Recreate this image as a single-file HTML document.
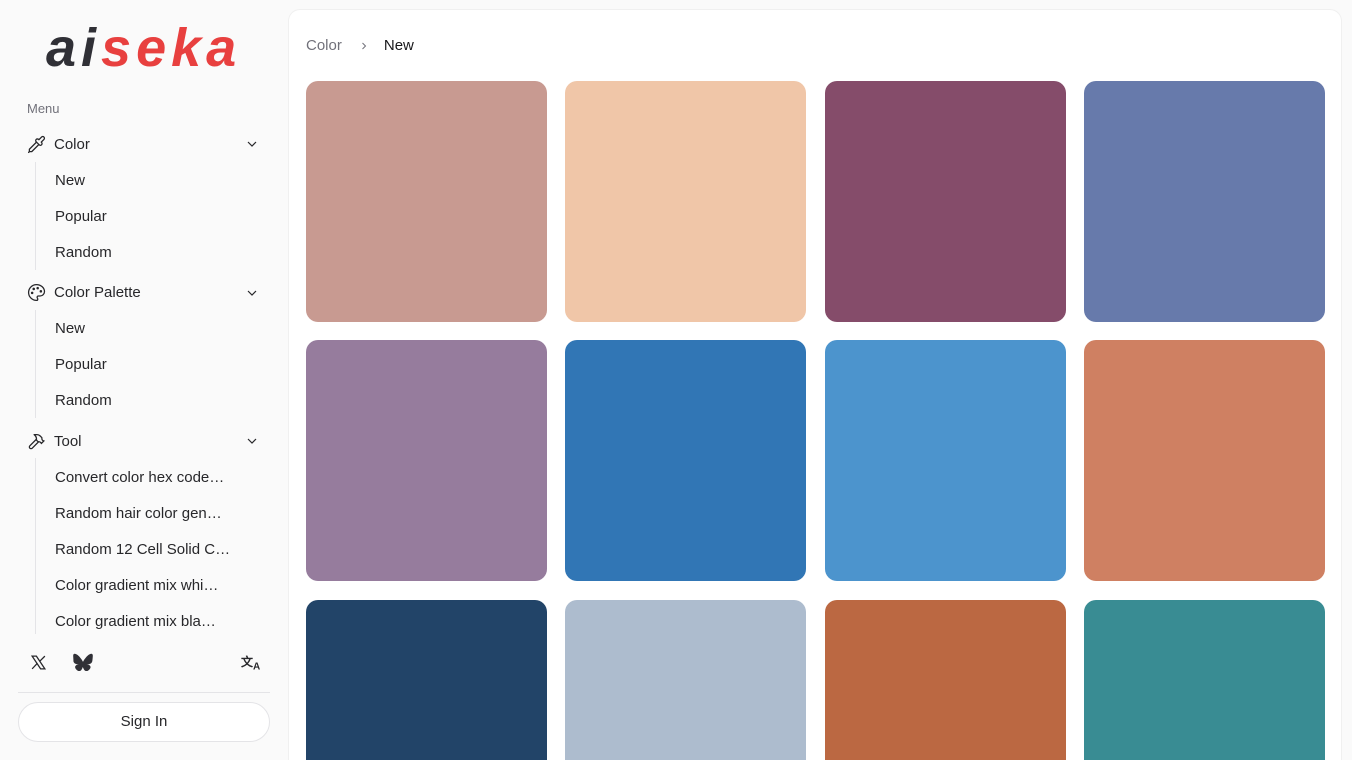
<!DOCTYPE html>
<html style="width:1352px;height:760px;overflow:hidden"><head><meta charset="utf-8"><style>
*{box-sizing:border-box;margin:0;padding:0}
body{width:1352px;height:760px;overflow:hidden;background:#fafafa;font-family:"Liberation Sans",sans-serif;color:#27272a;position:relative}
.side{position:absolute;left:0;top:0;width:288px;height:760px}
.logo{position:absolute;left:46px;top:18px;font-size:54px;font-weight:bold;font-style:italic;letter-spacing:5px;line-height:60px}
.logo .d{color:#303036}.logo .r{color:#e8403f}
.menu{position:absolute;left:27px;top:101px;font-size:13px;color:#71717a}
.item{position:absolute;left:27px;font-size:15px;color:#27272a;display:flex;align-items:center}
.item svg{margin-right:8px}
.chev{position:absolute;left:244px}
.sub{position:absolute;left:55px;font-size:15px;color:#27272a}
.vl{position:absolute;left:35px;width:1px;background:#e4e4e7}
.main{position:absolute;left:288px;top:9px;width:1054px;height:751px;background:#fff;border-radius:12px 12px 0 0;border:1px solid #f0f0f0;border-bottom:none}
.bc{position:absolute;left:306px;top:37px;font-size:15px;display:flex;align-items:center}
.sw{position:absolute;width:241px;height:241px;border-radius:12px}
</style></head><body>
<div class="side">
<div class="logo"><span class="d">ai</span><span class="r">seka</span></div>
<div class="menu">Menu</div>
<div class="item" style="top:135px"><svg width="19" height="19" viewBox="0 0 24 24" fill="none" stroke="#27272a" stroke-width="1.6" stroke-linecap="round" stroke-linejoin="round"><path d="M2 22l1-1h3l9-9"/><path d="M3 21v-3l9-9"/><path d="M15 6l3.4-3.4a2.1 2.1 0 1 1 3 3L18 9l.4.4a2.1 2.1 0 1 1-3 3l-3.8-3.8a2.1 2.1 0 1 1 3-3z"/></svg>Color</div>
<svg class="chev" style="top:136px" width="16" height="16" viewBox="0 0 24 24" fill="none" stroke="#27272a" stroke-width="1.8"><path d="M6 9l6 6 6-6"/></svg>
<div class="vl" style="top:162px;height:108px"></div>
<div class="sub" style="top:172px">New</div>
<div class="sub" style="top:208px">Popular</div>
<div class="sub" style="top:244px">Random</div>
<div class="item" style="top:283px"><svg width="19" height="19" viewBox="0 0 24 24" fill="none" stroke="#27272a" stroke-width="1.6"><circle cx="13.5" cy="6.5" r=".8"/><circle cx="17.5" cy="10.5" r=".8"/><circle cx="8.5" cy="7.5" r=".8"/><circle cx="6.5" cy="12.5" r=".8"/><path d="M12 2C6.5 2 2 6.5 2 12s4.5 10 10 10c.9 0 1.6-.7 1.6-1.7 0-.4-.2-.8-.4-1.1-.3-.3-.4-.7-.4-1.1 0-.9.7-1.7 1.7-1.7h2c3.1 0 5.6-2.5 5.6-5.6C22 6 17.5 2 12 2z"/></svg>Color Palette</div>
<svg class="chev" style="top:285px" width="16" height="16" viewBox="0 0 24 24" fill="none" stroke="#27272a" stroke-width="1.8"><path d="M6 9l6 6 6-6"/></svg>
<div class="vl" style="top:310px;height:108px"></div>
<div class="sub" style="top:320px">New</div>
<div class="sub" style="top:356px">Popular</div>
<div class="sub" style="top:392px">Random</div>
<div class="item" style="top:432px"><svg width="19" height="19" viewBox="0 0 24 24" fill="none" stroke="#27272a" stroke-width="1.6" stroke-linejoin="round"><path d="M15 12l-8.4 8.4a2.1 2.1 0 1 1-3-3L12 9"/><path d="M17.6 15L22 10.6M20.9 11.7l-1.3-1.3c-.5-.5-.8-1.2-.8-1.9V7.2L16.5 4.9A5.6 5.6 0 0 0 12.6 3.3H9l.9.8A6.2 6.2 0 0 1 12 8.7v1.6l2 2h1.2c.7 0 1.4.3 1.9.8l1.3 1.3"/></svg>Tool</div>
<svg class="chev" style="top:433px" width="16" height="16" viewBox="0 0 24 24" fill="none" stroke="#27272a" stroke-width="1.8"><path d="M6 9l6 6 6-6"/></svg>
<div class="vl" style="top:458px;height:176px"></div>
<div class="sub" style="top:469px">Convert color hex code…</div>
<div class="sub" style="top:505px">Random hair color gen…</div>
<div class="sub" style="top:541px">Random 12 Cell Solid C…</div>
<div class="sub" style="top:577px">Color gradient mix whi…</div>
<div class="sub" style="top:613px">Color gradient mix bla…</div>
<svg style="position:absolute;left:30px;top:654px" width="17" height="17" viewBox="0 0 24 24"><path d="M3 3h6l12 18h-6z" fill="none" stroke="#27272a" stroke-width="1.8"/><path d="M3 21L10.5 13M13.5 10.5L21 3" stroke="#27272a" stroke-width="1.8"/></svg>
<svg style="position:absolute;left:73px;top:653px" width="20" height="18" viewBox="0 0 24 22"><path d="M5.2 2.3C8 4.4 11 8.6 12 10.8c1-2.2 4-6.4 6.8-8.5 2-1.5 5.2-2.6 5.2 1 0 .7-.4 6-.7 6.9-.9 3.1-4.1 3.9-7 3.4 5 .9 6.3 3.7 3.5 6.5-5.2 5.4-7.5-1.3-8-3.1-.5 1.8-2.8 8.5-8 3.1-2.8-2.8-1.5-5.6 3.5-6.5-2.9.5-6.1-.3-7-3.4C.4 9.3 0 4 0 3.3c0-3.6 3.2-2.5 5.2-1z" fill="#303036"/></svg>
<div style="position:absolute;left:241px;top:653px;font-size:12px;font-weight:bold;color:#27272a">文<sub style="font-size:10px">A</sub></div>
<div style="position:absolute;left:18px;top:692px;width:252px;height:1px;background:#e4e4e7"></div>
<div style="position:absolute;left:18px;top:702px;width:252px;height:40px;border:1px solid #e4e4e7;border-radius:20px;background:#fff;text-align:center;line-height:38px;font-size:15px">Sign In</div>
</div>
<div class="main"></div>
<div class="bc"><span style="color:#71717a">Color</span><svg style="margin:0 14px 0 16px" width="12" height="12" viewBox="0 0 24 24" fill="none" stroke="#71717a" stroke-width="2"><path d="M9 6l6 6-6 6"/></svg><span style="color:#18181b">New</span></div>
<div class="sw" style="left:306px;top:81px;background:#c89a91"></div>
<div class="sw" style="left:565px;top:81px;background:#f0c6a8"></div>
<div class="sw" style="left:825px;top:81px;background:#854c6a"></div>
<div class="sw" style="left:1084px;top:81px;background:#677aab"></div>
<div class="sw" style="left:306px;top:340px;background:#967c9d"></div>
<div class="sw" style="left:565px;top:340px;background:#3176b5"></div>
<div class="sw" style="left:825px;top:340px;background:#4c94cd"></div>
<div class="sw" style="left:1084px;top:340px;background:#cf8062"></div>
<div class="sw" style="left:306px;top:600px;height:160px;border-radius:12px 12px 0 0;background:#224468"></div>
<div class="sw" style="left:565px;top:600px;height:160px;border-radius:12px 12px 0 0;background:#adbcce"></div>
<div class="sw" style="left:825px;top:600px;height:160px;border-radius:12px 12px 0 0;background:#bb6842"></div>
<div class="sw" style="left:1084px;top:600px;height:160px;border-radius:12px 12px 0 0;background:#398c93"></div>
</body></html>
